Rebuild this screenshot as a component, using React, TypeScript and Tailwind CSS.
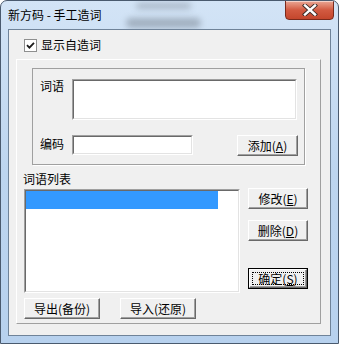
import type { ReactNode } from 'react';

const cjk = "font-['Noto_Sans_CJK_SC','Liberation_Sans',sans-serif]";

function Btn({ className, children, isDefault }: { className: string; children: ReactNode; isDefault?: boolean }) {
  if (isDefault) {
    return (
      <div className={`${className} border border-black`}>
        <div className="flex h-full w-full items-center justify-center border border-t-white border-l-white border-r-[#696969] border-b-[#696969] bg-[#f0f0f0] p-[2px] shadow-[inset_-1px_-1px_0_#a0a0a0]">
          <div className="flex h-full w-full items-center justify-center border border-dotted border-black text-[12px] leading-none text-black">
            {children}
          </div>
        </div>
      </div>
    );
  }
  return (
    <div
      className={`${className} flex items-center justify-center border border-t-white border-l-white border-r-[#696969] border-b-[#696969] bg-[#f0f0f0] text-[12px] leading-none text-black shadow-[inset_-1px_-1px_0_#a0a0a0]`}
    >
      {children}
    </div>
  );
}

function Sunken({ className, children }: { className: string; children?: ReactNode }) {
  return (
    <div className={`${className} border border-t-[#a0a0a0] border-l-[#a0a0a0] border-r-white border-b-white`}>
      <div className="h-full w-full border border-t-[#696969] border-l-[#696969] border-r-[#e3e3e3] border-b-[#e3e3e3] bg-white">
        {children}
      </div>
    </div>
  );
}

export default function App() {
  return (
    <div className={`${cjk} relative h-[344px] w-[339px] overflow-hidden rounded-t-[7px] border border-[#4a5a6e] bg-gradient-to-b from-[#d3e4f6] via-[#bdd5ef] to-[#b7d1ee] text-black`}>
      {/* glass blur behind title bar */}
      <div className="pointer-events-none absolute left-[135px] top-[2px] h-[6px] w-[55px] rounded-full bg-[#6b7480] opacity-40 blur-[3px]" />
      <div className="pointer-events-none absolute left-[125px] top-[17px] h-[10px] w-[75px] rounded-full bg-[#5b6570] opacity-40 blur-[3px]" />

      <div className="relative flex h-[28px] items-start">
        <span className="ml-[7px] mt-[7px] text-[12px] leading-[14px]">新方码 - 手工造词</span>
        <div className="ml-auto mr-[4px] -mt-px flex h-[20px] w-[49px] items-center justify-center rounded-b-[4px] border border-[#7a2a1c] bg-gradient-to-b from-[#e9a795] via-[#d25a41] to-[#c4462c] shadow-[inset_0_1px_0_rgba(255,255,255,0.5)]">
          <svg width="16" height="12" viewBox="0 0 16 12">
            <path d="M3 1.5 L13 10.5 M13 1.5 L3 10.5" stroke="#3a2b28" strokeWidth="4.2" strokeLinecap="square" />
            <path d="M3 1.5 L13 10.5 M13 1.5 L3 10.5" stroke="#ffffff" strokeWidth="2.4" strokeLinecap="square" />
          </svg>
        </div>
      </div>

      <div className="relative mx-[7px] h-[307px] border border-[#6f8399] bg-[#f0f0f0]">
        <div className="ml-[15px] mt-[8px] flex items-center">
          <div className="flex h-[13px] w-[13px] items-center justify-center border border-[#8e8f8f] bg-white">
            <svg width="9" height="9" viewBox="0 0 9 9">
              <path d="M1 4.2 L3.4 6.6 L8 1.8" fill="none" stroke="#1a1a1a" strokeWidth="1.8" />
            </svg>
          </div>
          <span className="ml-[4px] text-[12px] leading-[14px]">显示自造词</span>
        </div>

        <div className="ml-[7px] mt-[7px] h-[265px] w-[305px] border border-t-white border-l-white border-r-[#a0a0a0] border-b-[#a0a0a0]">
          <div className="ml-[15px] mt-[8px] h-[97px] w-[273px] border border-[#a0a0a0] shadow-[1px_1px_0_#fff]">
            <div className="flex pl-[7px] pt-[10px]">
              <span className="w-[32px] text-[12px] leading-[14px]">词语</span>
              <Sunken className="h-[41px] w-[225px]" />
            </div>
            <div className="mt-[15px] flex items-start pl-[7px]">
              <span className="mt-[2px] w-[32px] text-[12px] leading-[14px]">编码</span>
              <Sunken className="h-[20px] w-[121px]" />
              <Btn className="ml-[44px] h-[21px] w-[61px]">
                添加(<span className="underline">A</span>)
              </Btn>
            </div>
          </div>

          <div className="ml-[6px] mt-[7px] text-[12px] leading-[14px]">词语列表</div>
          <div className="mt-[2px] flex items-start">
            <Sunken className="ml-[7px] mt-px h-[104px] w-[216px]">
              <div className="h-[18px] w-[192px] bg-[#3399ff]" />
            </Sunken>
            <div className="ml-[8px] flex flex-col">
              <Btn className="h-[21px] w-[60px]">
                修改(<span className="underline">E</span>)
              </Btn>
              <Btn className="mt-[11px] h-[21px] w-[60px]">
                删除(<span className="underline">D</span>)
              </Btn>
              <Btn isDefault className="mt-[27px] h-[21px] w-[60px]">
                确定(<span className="underline">S</span>)
              </Btn>
            </div>
          </div>
          <div className="ml-[7px] mt-[5px] flex gap-[20px]">
            <Btn className="h-[21px] w-[76px]">导出(备份)</Btn>
            <Btn className="h-[21px] w-[76px]">导入(还原)</Btn>
          </div>
        </div>
      </div>
    </div>
  );
}
